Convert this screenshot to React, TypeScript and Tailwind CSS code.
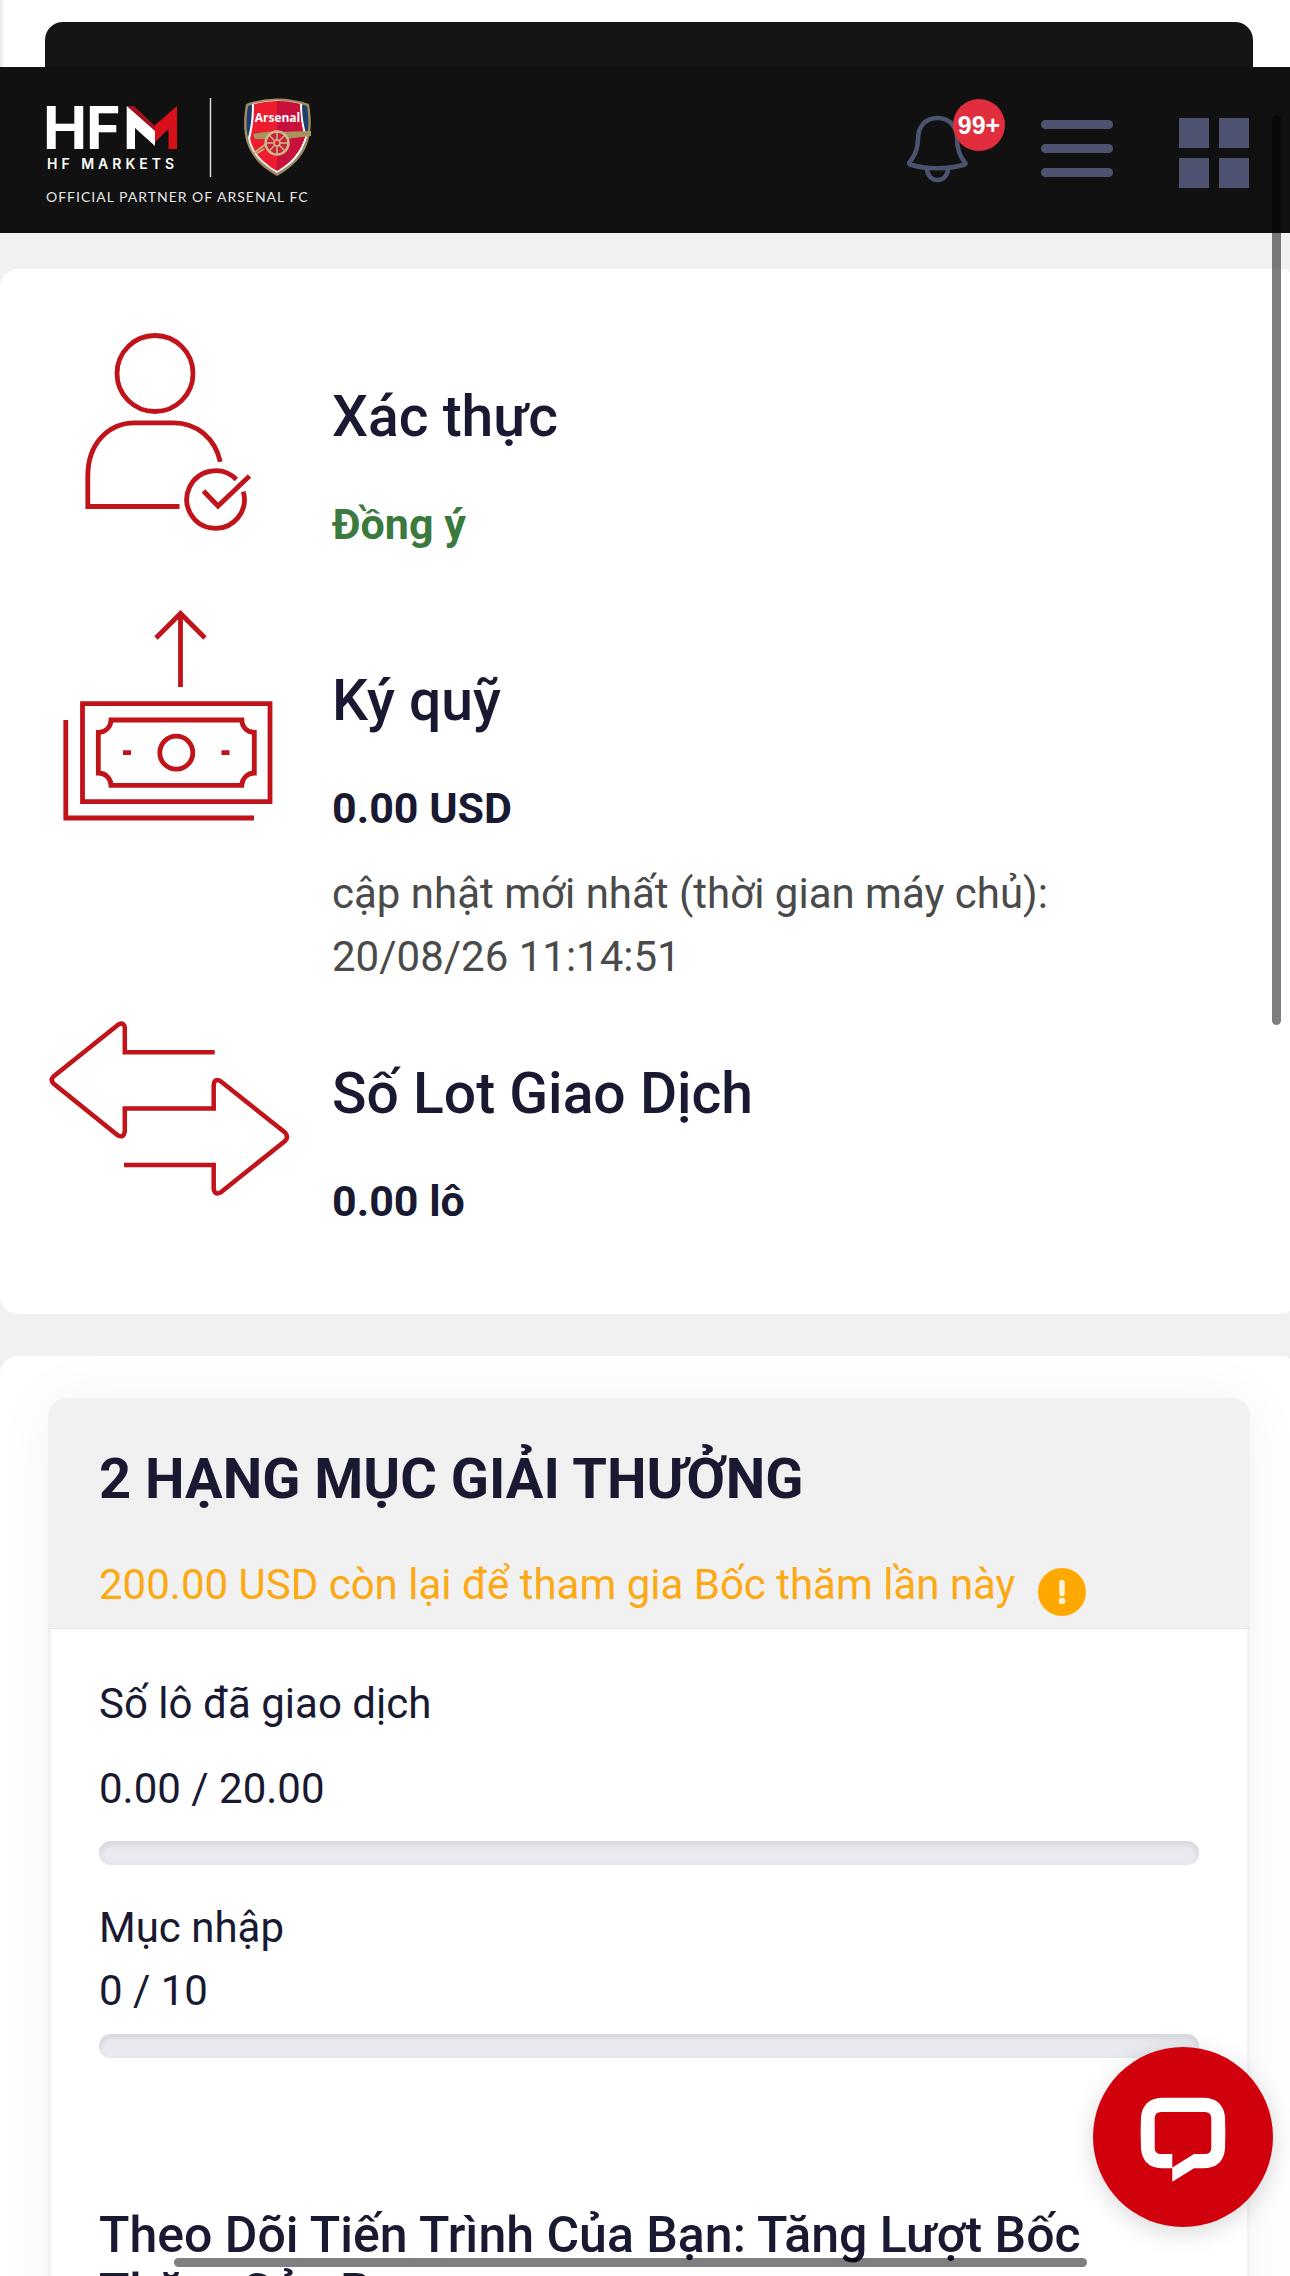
import React from 'react';

type Stat = {
  title: string;
  value: string;
  note?: string;
  positive?: boolean;
  icon: React.ReactNode;
};

function VerifiedIcon() {
  return (
    <svg viewBox="0 0 243 240" className="h-60 w-[243px] shrink-0" fill="none" stroke="#c0131a" strokeWidth="4.8" aria-hidden="true">
      <circle cx="107" cy="62.5" r="38" />
      <path d="M131.5 195.5H39.8V165C39.8 133 60 111.8 87 111.8h38.500c23 0 41.500 15 46.800 39" />
      <path d="M188.300 168.500A28.800 28.800 0 1 0 195.300 180.700" />
      <path d="M155.500 180 170 195 201.500 165" />
    </svg>
  );
}

function DepositIcon() {
  return (
    <svg viewBox="0 0 243 240" className="h-60 w-[243px] shrink-0" fill="none" stroke="#c0131a" strokeWidth="4.8" aria-hidden="true">
      <path d="M132.500 92V18M108 43l24.500-24.500L157 43" />
      <path d="M34.500 108.700H222v98H34.500z" />
      <path d="M17.800 125v98H206" />
      <path d="M63 125H193.800A12.500 12.500 0 0 0 206.300 137.500V178A12.500 12.500 0 0 0 193.800 190.300H63A12.500 12.500 0 0 0 50.300 178V137.500A12.500 12.500 0 0 0 63 125z" />
      <circle cx="128.300" cy="157.700" r="16.500" />
      <path d="M75 157.700h8M173.500 157.700h8" />
    </svg>
  );
}

function TradeIcon() {
  return (
    <svg viewBox="0 0 243 240" className="h-60 w-[243px] shrink-0" fill="none" stroke="#c0131a" strokeWidth="4.500" aria-hidden="true">
      <path d="M166.700 64.300H76.800V40Q76.200 33.500 70.500 36.500L5.500 88.500Q2 92 5.500 95.500L70 147.500Q76 150.500 76.800 143V120.500H165.700V97Q166.500 89.500 173 93.500L237 144.500Q241 149 237 153L172.500 204.500Q166.500 207.500 165.700 200.500V177H76" />
    </svg>
  );
}

function BrandLogo() {
  return (
    <svg viewBox="42 90 274 120" className="h-[120px] w-[274px] overflow-visible" role="img" aria-label="HFM">
      <text x="43 86" y="149" fontSize="59" className="fill-white font-['Inter'] font-bold">HF</text>
      <path d="M177 106 154 126v17l14.500-14v20H177z" fill="#d8101a" />
      <path d="M127 106h7l21 20v8z" fill="#a3121c" />
      <path d="M126.700 106 155 131v15l-20-18v21h-8.300z" fill="#fff" />
      <text x="47" y="169" fontSize="14" className="fill-white font-['Inter'] font-semibold tracking-[4px]">HF MARKETS</text>
      <path d="M210.500 98v79" stroke="#d8d8d8" strokeWidth="1.500" />
      <text x="46" y="202" fontSize="14" className="fill-[#e4e4e4] font-['Lato'] tracking-[1px]">OFFICIAL PARTNER OF ARSENAL FC</text>

      {/* club crest */}
      <path d="M246 104q31-11 63 0c5 28 1 54-32 72-33-18-36-44-31-72z" fill="#a08c5f" />
      <path d="M248 106q29-9 59 0c4 26 1 49-30 67-31-18-33-41-29-67z" fill="#1d3e6e" />
      <path d="M252 104q25-7 50 0c0 13 2 23 5 33-5 17-14 27-30 36-16-9-26-20-29-35 3-12 4-21 4-34z" fill="#fff" />
      <path d="M254 104q23-6 46 0c0 14 2 24 5 33-5 15-13 25-28 34-15-9-24-19-27-32 3-12 4-21 4-35z" fill="#ed1c2e" />
      <path d="M277 101q12 0 23 3c0 14 2 24 5 33-5 15-13 25-28 34z" fill="#c8103c" />
      <path d="M253 134q14-3 24-2l34-1v5l-26 3-30 0z" fill="#a9945f" />
      <path d="M266 144l-12 9M264 149l-8 5" stroke="#c8b07a" strokeWidth="2" />
      <circle cx="277" cy="143" r="11.500" fill="#c8203a" stroke="#cdb885" strokeWidth="2.500" />
      <path d="M277 132v22M266 143h22M269 135l16 16M285 135l-16 16" stroke="#cdb885" strokeWidth="1.500" />
      <circle cx="277" cy="143" r="3" fill="#ed1c2e" stroke="#cdb885" strokeWidth="1.500" />
      <text x="277.500" y="122" fontSize="12" textAnchor="middle" className="fill-white font-['Open_Sans'] font-bold">Arsenal</text>
    </svg>
  );
}

const stats: Stat[] = [
  { title: 'Xác thực', value: 'Đồng ý', positive: true, icon: <VerifiedIcon /> },
  {
    title: 'Ký quỹ',
    value: '0.00 USD',
    note: 'cập nhật mới nhất (thời gian máy chủ): 20/08/26 11:14:51',
    icon: <DepositIcon />,
  },
  { title: 'Số Lot Giao Dịch', value: '0.00 lô', icon: <TradeIcon /> },
];

function Header() {
  return (
    <header className="relative z-10 flex h-[166px] items-center justify-between bg-[#111111] pl-[42px] pr-[41px]">
      <a href="#home" aria-label="HFM">
        <BrandLogo />
      </a>
      <nav className="flex items-center gap-[66px]">
        <button type="button" className="relative h-20 w-[68px]" aria-label="Thông báo">
          <svg viewBox="0 0 68 80" className="h-20 w-[68px]" fill="none" stroke="#4b536f" strokeWidth="4.500" strokeLinejoin="round" aria-hidden="true">
            <path d="M30.500 8C18 8 11 17 11 29c0 10-3 17-9 24q0 1 1 1.500c16 5 38 5 55 0q1-1 0-2c-6-7-8-14-8-24C50 17 43 8 30.500 8z" />
            <path d="M20 58c0 7 4 12 10.500 12S41 65 41 58" />
          </svg>
          <span className="absolute -right-[30px] -top-[11px] flex h-[52px] w-[52px] items-center justify-center rounded-full bg-[#e12d3e] font-['Liberation_Sans'] text-[25px] font-bold text-white">
            99+
          </span>
        </button>
        <button type="button" className="h-20 w-[72px]" aria-label="Menu">
          <svg viewBox="0 0 72 80" className="h-20 w-[72px]" fill="#4e5372" aria-hidden="true">
            <rect y="10" width="72" height="9" rx="4.500" />
            <rect y="34" width="72" height="9" rx="4.500" />
            <rect y="58" width="72" height="9" rx="4.500" />
          </svg>
        </button>
        <button type="button" className="h-20 w-[70px]" aria-label="Ứng dụng">
          <svg viewBox="0 0 70 80" className="h-20 w-[70px]" fill="#4e5372" aria-hidden="true">
            <path d="M0 8h30v30H0zM40 8h30v30H40zM0 48h30v30H0zM40 48h30v30H40z" />
          </svg>
        </button>
      </nav>
    </header>
  );
}

function StatRow({ stat }: { stat: Stat }) {
  return (
    <div className="flex min-h-[284px] gap-[41px]">
      {stat.icon}
      <div className="max-w-[740px] pt-[72px]">
        <h2 className="text-[57px] font-medium leading-[68px]">{stat.title}</h2>
        <p className={stat.positive ? 'mt-[42px] text-[43px] font-bold text-[#3b7a3e]' : 'mt-[42px] text-[43px] font-bold'}>
          {stat.value}
        </p>
        {stat.note && <p className="mt-[22px] text-[#4a4a4a]">{stat.note}</p>}
      </div>
    </div>
  );
}

function ProgressBar({ label, value, max }: { label: string; value: number; max: number }) {
  return (
    <div
      role="progressbar"
      aria-label={label}
      aria-valuenow={value}
      aria-valuemax={max}
      className="h-6 overflow-hidden rounded-full bg-[#e9e9f0] shadow-[inset_0_3px_6px_rgba(0,0,0,0.1)]"
    >
      <div className="h-full bg-[#d0000c]" style={{ width: `${(value / max) * 100}%` }} />
    </div>
  );
}

export default function App() {
  return (
    <div className="relative h-screen overflow-hidden bg-[#f1f1f1] font-['Roboto',sans-serif] text-[42px] leading-[63px] text-[#191932]">
      <div className="-mr-2 h-[67px] border-l-[3px] border-[#eeeeee] bg-white pl-[42px] pr-[45px] pt-[22px]">
        <div className="h-full rounded-t-[18px] bg-[#151515]" />
      </div>

      <Header />

      <main className="-mr-2 flex flex-col gap-[42px] pt-9">
        <section className="rounded-[18px] bg-white px-12 py-[42px]">
          {stats.map(stat => (
            <StatRow key={stat.title} stat={stat} />
          ))}
        </section>

        <section className="rounded-[18px] bg-white px-12 py-[42px]">
          <div className="rounded-[18px] shadow-[0_0_60px_rgba(0,0,0,0.05)]">
            <div className="rounded-t-[18px] border-b border-[#e8e8e8] bg-[#f1f1f1] px-[51px] pb-3 pt-[49px]">
              <h2 className="text-[56px] font-bold leading-[65px]">2 HẠNG MỤC GIẢI THƯỞNG</h2>
              <div className="mt-[41px] flex items-end gap-[22px] text-[#fba914]">
                <p>200.00 USD còn lại để tham gia Bốc thăm lần này</p>
                <button type="button" aria-label="Thông tin" className="h-12 w-12 shrink-0">
                  <svg viewBox="0 0 48 48" className="h-12 w-12" aria-hidden="true">
                    <circle cx="24" cy="24" r="24" fill="#ffa800" />
                    <path d="M24 14.500v11" stroke="#fff3d6" strokeWidth="5.500" strokeLinecap="round" />
                    <circle cx="24" cy="33" r="3.300" fill="#fff3d6" />
                  </svg>
                </button>
              </div>
            </div>

            <div className="rounded-b-[18px] border-x-[3px] border-[#f3f3f3] bg-white px-12 pb-20 pt-[43px]">
              <p>Số lô đã giao dịch</p>
              <p className="mb-[21px] mt-[22px]">0.00 / 20.00</p>
              <ProgressBar label="Số lô đã giao dịch" value={0} max={20} />

              <p className="mt-[31px]">Mục nhập</p>
              <p className="mb-3">0 / 10</p>
              <ProgressBar label="Mục nhập" value={0} max={10} />

              <h3 className="mt-[149px] max-w-[1060px] text-[50px] font-medium leading-[57px]">
                Theo Dõi Tiến Trình Của Bạn: Tăng Lượt Bốc Thăm Của Bạn
              </h3>
            </div>
          </div>
        </section>
      </main>

      {/* overlay scroll indicators */}
      <div className="absolute right-[9px] top-[115px] z-20 h-[910px] w-[9px] rounded-full bg-black/50" />
      <div className="absolute bottom-[9px] left-[174px] z-20 h-[9px] w-[913px] rounded-full bg-black/50" />

      <button
        type="button"
        aria-label="Chat"
        className="absolute bottom-[49px] right-[17px] z-20 h-[180px] w-[180px] rounded-full bg-[#d0000c] shadow-[0_6px_24px_rgba(0,0,0,0.15)]"
      >
        <svg viewBox="0 0 180 180" className="h-full w-full" fill="#fff" aria-hidden="true">
          <path d="M79.300 121.300H70Q50 121.300 48 102Q47.300 86 48 70Q50 51 70 50.700H110Q130 51 132 70Q132.700 86 132 102Q130 121.300 110 121.300H101L79.300 134.700V120.500L101 107H112Q118 107 118.300 101V71Q118 65 112 65H68Q62 65 61.700 71V101Q62 107 68 107H79.300Z" />
        </svg>
      </button>
    </div>
  );
}
